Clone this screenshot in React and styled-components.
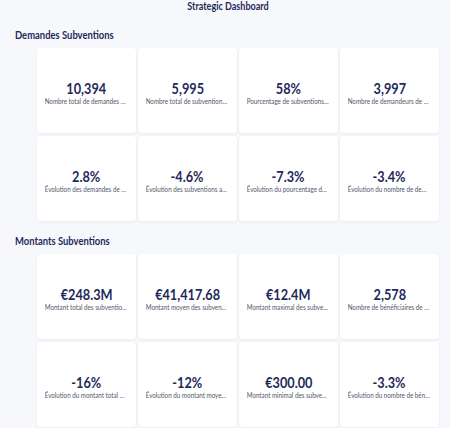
import React from 'react';
import styled, { createGlobalStyle, css } from 'styled-components';

const GlobalStyle = createGlobalStyle`
  html, body {
    margin: 0;
    padding: 0;
    background: #f7f8fb;
    font-family: Lato, "Open Sans", sans-serif;
  }
`;

// the dashboard type is set in a narrow cut, so every text is squeezed a little
const narrow = (scale = 0.82, origin = 'center') => css`
  transform: scaleX(${scale});
  transform-origin: ${origin};
`;

const Page = styled.main`
  width: 450px;
  min-height: 428px;
  display: flex;
  flex-direction: column;
  background: #f7f8fb;
`;

const Title = styled.h1`
  margin: -1px 0 0;
  padding-left: 6px;
  text-align: center;
  font-size: 11px;
  line-height: 13px;
  font-weight: 700;
  color: #1f2a5c;
  ${narrow(0.82, 'calc(50% + 3px) 50%')}
`;

const Section = styled.section`
  margin-top: ${(p) => p.$top}px;
`;

const Heading = styled.h2`
  margin: 0 0 7px 15px;
  font-size: 11.5px;
  line-height: 13px;
  font-weight: 700;
  color: #1f2a5c;
  ${narrow(0.82, 'left')}
`;

const Grid = styled.div`
  display: grid;
  grid-template-columns: repeat(4, 1fr);
  grid-auto-rows: 85px;
  gap: 3px 2px;
  padding: 0 11px 0 37px;
`;

const Card = styled.div`
  background: #ffffff;
  border-radius: 4px;
  box-shadow: 0 1px 3px rgba(30, 40, 80, 0.06);
  display: flex;
  flex-direction: column;
  align-items: center;
  justify-content: center;
  padding: 5px 8px 0;
  min-width: 0;
  overflow: hidden;
`;

const Value = styled.div`
  font-size: 15.5px;
  line-height: 16px;
  font-weight: 700;
  color: #1f2a5c;
  white-space: nowrap;
  ${narrow()}
`;

const Label = styled.div`
  flex: none;
  width: 128%;
  text-align: center;
  font-size: 8px;
  line-height: 10px;
  color: #50566a;
  white-space: nowrap;
  overflow: hidden;
  text-overflow: ellipsis;
  ${narrow(0.78)}
`;

const sections = [
  {
    title: 'Demandes Subventions',
    top: 16,
    cards: [
      ['10,394', 'Nombre total de demandes de subventions'],
      ['5,995', 'Nombre total de subventions accordées'],
      ['58%', 'Pourcentage de subventions accordées'],
      ['3,997', 'Nombre de demandeurs de subventions'],
      ['2.8%', 'Évolution des demandes de subventions'],
      ['-4.6%', 'Évolution des subventions accordées'],
      ['-7.3%', 'Évolution du pourcentage de subventions accordées'],
      ['-3.4%', 'Évolution du nombre de demandeurs'],
    ],
  },
  {
    title: 'Montants Subventions',
    top: 13,
    cards: [
      ['€248.3M', 'Montant total des subventions accordées'],
      ['€41,417.68', 'Montant moyen des subventions accordées'],
      ['€12.4M', 'Montant maximal des subventions accordées'],
      ['2,578', 'Nombre de bénéficiaires de subventions'],
      ['-16%', 'Évolution du montant total des subventions'],
      ['-12%', 'Évolution du montant moyen des subventions'],
      ['€300.00', 'Montant minimal des subventions accordées'],
      ['-3.3%', 'Évolution du nombre de bénéficiaires'],
    ],
  },
];

const App = () => (
  <>
    <GlobalStyle />
    <Page>
      <Title>Strategic Dashboard</Title>
      {sections.map((s) => (
        <Section key={s.title} $top={s.top}>
          <Heading>{s.title}</Heading>
          <Grid>
            {s.cards.map(([value, label]) => (
              <Card key={label}>
                <Value>{value}</Value>
                <Label>{label}</Label>
              </Card>
            ))}
          </Grid>
        </Section>
      ))}
    </Page>
  </>
);

export default App;
